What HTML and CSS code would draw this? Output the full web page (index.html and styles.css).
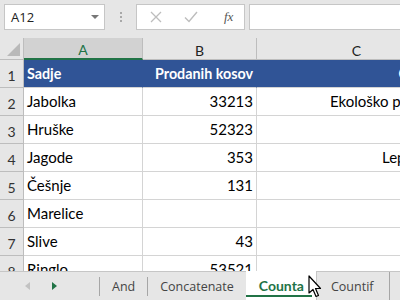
FILE: index.html
```html
<!DOCTYPE html>
<html lang="sl">
<head>
  <meta charset="UTF-8">
  <title>Counta</title>
  <link rel="stylesheet" href="styles.css">
</head>
<body>

  <div class="formula-bar">
    <div class="name-box">
      <span>A12</span>
      <span class="caret"></span>
    </div>
    <div class="grip"><i></i><i></i><i></i></div>
    <div class="fx-buttons">
      <svg width="12" height="12" viewBox="0 0 12 12"><path d="M1 1 L11 11 M11 1 L1 11" stroke="#bdbdbd" stroke-width="1.3" fill="none"/></svg>
      <svg width="14" height="12" viewBox="0 0 14 12"><path d="M1 6.5 L5 10.5 L13 1" stroke="#bdbdbd" stroke-width="1.4" fill="none"/></svg>
      <span class="fx">fx</span>
    </div>
    <div class="formula-input"></div>
  </div>

  <div class="sheet">
    <div class="grid">
      <div class="corner"><span class="corner-tri"></span></div>
      <div class="col-head selected">A</div>
      <div class="col-head">B</div>
      <div class="col-head">C</div>

      <div class="row-head">1</div>
      <div class="cell head">Sadje</div>
      <div class="cell head num">Prodanih kosov</div>
      <div class="cell head note">Opombe</div>

      <div class="row-head">2</div>
      <div class="cell">Jabolka</div>
      <div class="cell num">33213</div>
      <div class="cell note">Ekološko pridelano</div>

      <div class="row-head">3</div>
      <div class="cell">Hruške</div>
      <div class="cell num">52323</div>
      <div class="cell note"></div>

      <div class="row-head">4</div>
      <div class="cell">Jagode</div>
      <div class="cell num">353</div>
      <div class="cell note">Lepe barve</div>

      <div class="row-head">5</div>
      <div class="cell">Češnje</div>
      <div class="cell num">131</div>
      <div class="cell note"></div>

      <div class="row-head">6</div>
      <div class="cell">Marelice</div>
      <div class="cell num"></div>
      <div class="cell note"></div>

      <div class="row-head">7</div>
      <div class="cell">Slive</div>
      <div class="cell num">43</div>
      <div class="cell note"></div>

      <div class="row-head">8</div>
      <div class="cell">Ringlo</div>
      <div class="cell num">53521</div>
      <div class="cell note"></div>
    </div>
  </div>

  <div class="tabs">
    <div class="tab-nav">
      <span class="arrow-left"></span>
      <span class="arrow-right"></span>
    </div>
    <div class="tab">And</div>
    <div class="tab">Concatenate</div>
    <div class="tab active">Counta</div>
    <div class="tab framed">Countif</div>

    <svg class="pointer" width="16" height="24" viewBox="0 0 16 24">
      <path d="M1 1 L1 18 L5 14.5 L8 21.5 L10.5 20.5 L7.5 13.5 L12.5 13.5 Z" fill="#fff" stroke="#000" stroke-width="1.2" stroke-linejoin="round"/>
    </svg>
  </div>

</body>
</html>
```

FILE: styles.css
```css
* {
  margin: 0;
  padding: 0;
  box-sizing: border-box;
}

body {
  width: 400px;
  height: 300px;
  overflow: hidden;
  background: #e6e6e6;
  font-family: 'Lato', sans-serif;
  color: #000;
}

/* Formula bar */
.formula-bar {
  height: 38px;
  display: flex;
  align-items: flex-start;
  padding: 4px 0 0 4px;
}

.name-box {
  width: 101px;
  height: 26px;
  background: #fff;
  border: 1px solid #c6c6c6;
  display: flex;
  align-items: center;
  justify-content: space-between;
  padding: 0 5px 0 6px;
  font-family: 'Open Sans', sans-serif;
  font-size: 13px;
  color: #222;
}

.caret {
  width: 0;
  height: 0;
  border-left: 4px solid transparent;
  border-right: 4px solid transparent;
  border-top: 4px solid #777;
}

.grip {
  width: 31px;
  height: 26px;
  display: flex;
  flex-direction: column;
  align-items: center;
  justify-content: center;
  gap: 2px;
}

.grip i {
  width: 2px;
  height: 2px;
  background: #a8a8a8;
}

.fx-buttons {
  width: 109px;
  height: 26px;
  background: #fff;
  border: 1px solid #c6c6c6;
  display: flex;
  align-items: center;
  padding-left: 13px;
  gap: 22px;
}

.fx {
  font-family: 'Liberation Serif', serif;
  font-style: italic;
  font-size: 13px;
  color: #555;
  margin-left: 4px;
}

.formula-input {
  flex: 1;
  height: 26px;
  margin-left: 4px;
  background: #fff;
  border: 1px solid #c6c6c6;
  border-right: none;
}

/* Sheet grid */
.sheet {
  height: 233px;
  overflow: hidden;
  background: #fff;
}

.grid {
  display: grid;
  grid-template-columns: 24px 119px 114px 200px;
  grid-template-rows: 22px;
  grid-auto-rows: 28px;
  width: 457px;
}

.corner {
  position: relative;
  background: #e6e6e6;
  border-right: 1px solid #bdbdbd;
  border-bottom: 1px solid #bdbdbd;
}

.corner-tri {
  position: absolute;
  right: 3px;
  bottom: 3px;
  width: 0;
  height: 0;
  border-left: 13px solid transparent;
  border-bottom: 13px solid #b9b9b9;
}

.col-head {
  background: #e6e6e6;
  border-right: 1px solid #bdbdbd;
  border-bottom: 1px solid #bdbdbd;
  display: flex;
  align-items: center;
  justify-content: center;
  font-size: 14px;
  color: #222;
  padding-top: 3px;
}

.col-head.selected {
  background: #d2d2d2;
  border-bottom: 2px solid #217346;
  color: #217346;
}

.row-head {
  background: #e6e6e6;
  border-right: 1px solid #bdbdbd;
  border-bottom: 1px solid #bdbdbd;
  display: flex;
  align-items: flex-end;
  justify-content: center;
  padding-bottom: 3px;
  font-size: 14px;
  color: #333;
}

.cell {
  border-right: 1px solid #d4d4d4;
  border-bottom: 1px solid #d4d4d4;
  display: flex;
  align-items: flex-end;
  padding: 0 3px 5px 3px;
  font-size: 15px;
  white-space: nowrap;
  overflow: hidden;
}

.cell.num {
  justify-content: flex-end;
}

.cell.note {
  justify-content: flex-end;
  border-right: none;
}

.cell.head {
  background: #305496;
  color: #fff;
  font-weight: bold;
  font-size: 14.3px;
  border-right-color: #305496;
}

/* Sheet tabs */
.tabs {
  position: relative;
  height: 29px;
  border-top: 1px solid #c6c6c6;
  background: #e6e6e6;
  display: flex;
  align-items: stretch;
  font-family: 'Open Sans', sans-serif;
  font-size: 12.5px;
  color: #444;
}

.tab-nav {
  width: 99px;
  display: flex;
  align-items: center;
  padding-left: 25px;
  gap: 22px;
}

.arrow-left {
  width: 0;
  height: 0;
  border-top: 4px solid transparent;
  border-bottom: 4px solid transparent;
  border-right: 5px solid #c2c2c2;
}

.arrow-right {
  width: 0;
  height: 0;
  border-top: 4px solid transparent;
  border-bottom: 4px solid transparent;
  border-left: 5px solid #217346;
}

.tab {
  display: flex;
  align-items: center;
  padding: 0 12px 0 12px;
  border-left: 1px solid #a6a6a6;
  margin: 5px 0 4px;
}

.tab.active {
  margin: -1px 0 0;
  padding: 0 12px 0 13px;
  background: #fff;
  border-left: none;
  color: #217346;
  font-family: 'Lato', sans-serif;
  font-size: 14px;
  font-weight: bold;
  position: relative;
}

.tab.active::after {
  content: "";
  position: absolute;
  left: 0;
  right: 4px;
  bottom: 3px;
  height: 2px;
  background: #217346;
}

.tab.framed {
  margin: 0;
  padding: 0 15px 0 14px;
  border-left: 1px solid #c6c6c6;
  border-right: 1px solid #a6a6a6;
}

.pointer {
  position: absolute;
  left: 308px;
  top: 3px;
}
```
